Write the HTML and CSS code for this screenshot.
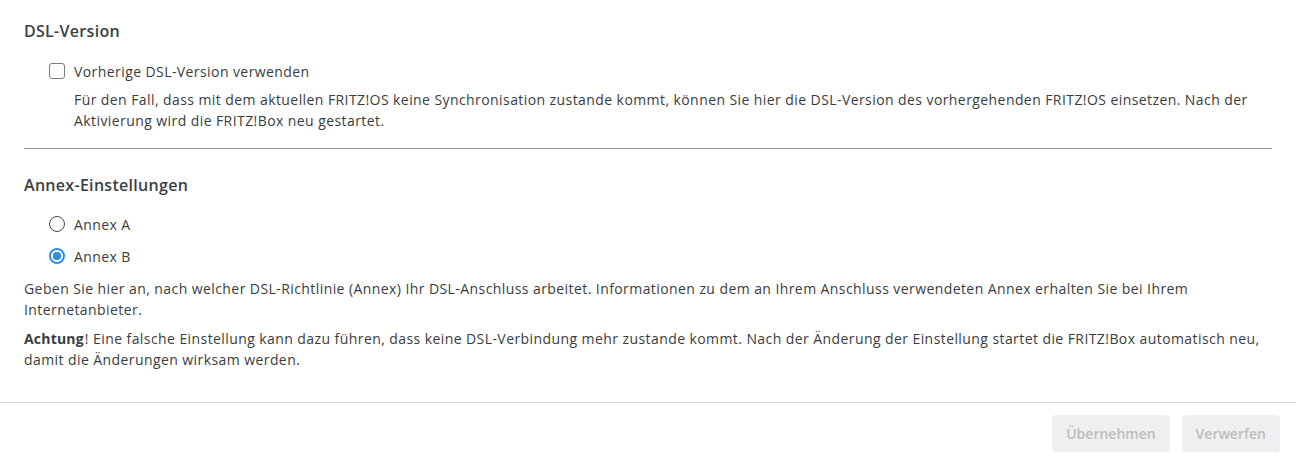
FILE: index.html
```html
<!DOCTYPE html>
<html lang="de">
<head>
    <meta charset="UTF-8">
    <title>DSL-Einstellungen</title>
    <link rel="stylesheet" href="styles.css">
</head>
<body>
    <div class="page">
        <div class="content">
            <section class="block">
                <h2>DSL-Version</h2>
                <label class="option indent">
                    <input type="checkbox" class="check">
                    <span>Vorherige DSL-Version verwenden</span>
                </label>
                <p class="hint indent-text">Für den Fall, dass mit dem aktuellen FRITZ!OS keine Synchronisation zustande kommt, können Sie hier die DSL-Version des vorhergehenden FRITZ!OS einsetzen. Nach der Aktivierung wird die FRITZ!Box neu gestartet.</p>
            </section>

            <hr class="divider">

            <section class="block">
                <h2 class="second">Annex-Einstellungen</h2>
                <label class="option indent first-radio">
                    <input type="radio" name="annex" class="radio">
                    <span>Annex A</span>
                </label>
                <label class="option indent next-radio">
                    <input type="radio" name="annex" class="radio" checked>
                    <span>Annex B</span>
                </label>
                <p class="info">Geben Sie hier an, nach welcher DSL-Richtlinie (Annex) Ihr DSL-Anschluss arbeitet. Informationen zu dem an Ihrem Anschluss verwendeten Annex erhalten Sie bei Ihrem Internetanbieter.</p>
                <p class="info warn"><strong>Achtung</strong>! Eine falsche Einstellung kann dazu führen, dass keine DSL-Verbindung mehr zustande kommt. Nach der Änderung der Einstellung startet die FRITZ!Box automatisch neu, damit die Änderungen wirksam werden.</p>
            </section>
        </div>

        <div class="actions">
            <button class="btn" disabled>Übernehmen</button>
            <button class="btn" disabled>Verwerfen</button>
        </div>
    </div>
</body>
</html>
```

FILE: styles.css
```css
body, html {
    margin: 0;
    padding: 0;
    background: #fff;
}

body {
    font-family: "Open Sans", "Liberation Sans", sans-serif;
    font-size: 14px;
    line-height: 21px;
    letter-spacing: 0.42px;
    color: #3a3d40;
}

.content {
    padding: 20px 24px 0 24px;
}

h2 {
    margin: 0;
    font-size: 16px;
    line-height: 22px;
    font-weight: 600;
    letter-spacing: 0.3px;
    color: #3a3f44;
}

h2.second {
    margin-top: 25px;
}

.option {
    display: flex;
    align-items: center;
    gap: 9px;
    height: 24px;
    margin-top: 17px;
    cursor: pointer;
}

.indent {
    padding-left: 25px;
}

.indent-text {
    padding-left: 50px;
}

.first-radio {
    margin-top: 16px;
}

.next-radio {
    margin-top: 8px;
}

.check,
.radio {
    appearance: none;
    -webkit-appearance: none;
    margin: 0;
    width: 16px;
    height: 16px;
    flex: none;
    box-sizing: border-box;
    background: #fff;
}

.check {
    border: 1.5px solid #7a7a7a;
    border-radius: 3px;
}

.radio {
    border: 1.5px solid #4a4a4a;
    border-radius: 50%;
}

.radio:checked {
    border: 2px solid #2f8fe0;
    background: radial-gradient(circle, #2f8fe0 0, #2f8fe0 4px, #fff 4.5px);
}

.hint {
    margin: 6px 0 0 0;
}

.divider {
    border: none;
    border-top: 1px solid #9a9a9a;
    margin: 17px 0 0 0;
}

.info {
    margin: 10px 0 0 0;
}

.warn {
    margin-top: 8px;
}

.warn strong {
    font-weight: bold;
    letter-spacing: 0.2px;
    margin-right: 1px;
}

.actions {
    margin-top: 32px;
    border-top: 1px solid #dcdcdc;
    padding: 12px 16px 0 0;
    display: flex;
    justify-content: flex-end;
    gap: 12px;
}

.btn {
    height: 37px;
    padding: 0 14px;
    border: none;
    border-radius: 4px;
    background: #efefef;
    color: #bdbdbd;
    font-family: "Open Sans", "Liberation Sans", sans-serif;
    font-size: 14px;
    font-weight: 600;
    letter-spacing: 0;
}
```
